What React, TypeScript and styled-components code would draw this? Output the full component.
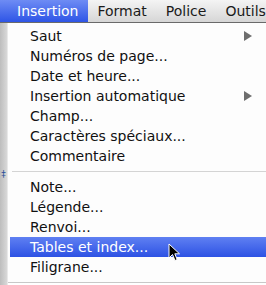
import styled, { createGlobalStyle } from 'styled-components';

const Global = createGlobalStyle`
    html, body{
        margin: 0;
        padding: 0;
        background: #fff;
    }
    body{
        font-family: "DejaVu Sans", "Liberation Sans", sans-serif;
        width: 266px;
        height: 285px;
        overflow: hidden;
    }
`

const Screen = styled.div`
    width: 266px;
    height: 285px;
    display: flex;
    flex-direction: column;
    position: relative;
`

const MenuBar = styled.div`
    display: flex;
    height: 22px;
    background: linear-gradient(#f4f4f4, #d6d6d6);
    border-bottom: 1px solid #6a6a6a;
    white-space: nowrap;
    overflow: hidden;
`

const BarItem = styled.div<{ $active?: boolean }>`
    display: flex;
    align-items: center;
    padding: 0 10px 0 ${p => p.$active ? 17 : 9}px;
    font-size: 14px;
    color: ${p => p.$active ? '#fff' : '#1a1a1a'};
    background: ${p => p.$active ? 'linear-gradient(#6e8cf4, #2e55e6)' : 'transparent'};
`

const Body = styled.div`
    flex: 1;
    display: flex;
`

const Strip = styled.div`
    width: 7px;
    background: linear-gradient(90deg, #bdbdbd, #d8d8d8);
    border-right: 1px solid #e8e8e8;
    display: flex;
    flex-direction: column;
    align-items: center;
    padding-top: 146px;
    font-size: 9px;
    color: #2a4f9a;
    overflow: hidden;
`

const Menu = styled.div`
    flex: 1;
    background: #fdfdfd;
    padding: 3px 0 4px 2px;
    border-bottom: 1px solid #c8c8c8;
    margin-bottom: 2px;
`

const Item = styled.div<{ $hi?: boolean }>`
    height: 20px;
    display: flex;
    align-items: center;
    justify-content: space-between;
    padding: 0 14px 0 20px;
    font-size: 14px;
    color: ${p => p.$hi ? '#fff' : '#111'};
    background: ${p => p.$hi ? 'linear-gradient(#5f80f2, #2d52e4)' : 'transparent'};
`

const Arrow = styled.span`
    width: 0;
    height: 0;
    border-top: 5px solid transparent;
    border-bottom: 5px solid transparent;
    border-left: 8px solid #6e6e6e;
`

const Separator = styled.div`
    height: 1px;
    background: #d4d4d4;
    margin: 5px 0 5px 2px;
`

const Cursor = styled.svg`
    position: absolute;
    left: 168px;
    top: 243px;
`

const top = [
    { label: 'Saut', sub: true },
    { label: 'Numéros de page...' },
    { label: 'Date et heure...' },
    { label: 'Insertion automatique', sub: true },
    { label: 'Champ...' },
    { label: 'Caractères spéciaux...' },
    { label: 'Commentaire' },
]

const bottom = [
    { label: 'Note...' },
    { label: 'Légende...' },
    { label: 'Renvoi...' },
    { label: 'Tables et index...', hi: true },
    { label: 'Filigrane...' },
]

function App(){
    return(
        <Screen>
            <Global />
            <MenuBar>
                <BarItem $active>Insertion</BarItem>
                <BarItem>Format</BarItem>
                <BarItem>Police</BarItem>
                <BarItem>Outils</BarItem>
            </MenuBar>
            <Body>
                <Strip>‡</Strip>
                <Menu>
                    {top.map(it => (
                        <Item key={it.label}>
                            <span>{it.label}</span>
                            {it.sub && <Arrow />}
                        </Item>
                    ))}
                    <Separator />
                    {bottom.map(it => (
                        <Item key={it.label} $hi={it.hi}>
                            <span>{it.label}</span>
                        </Item>
                    ))}
                </Menu>
            </Body>
            <Cursor width="14" height="20" viewBox="0 0 14 20">
                <path d="M1 1 L1 15 L4.5 11.5 L7 17.5 L9.2 16.6 L6.8 10.8 L11.5 10.8 Z" fill="#000" stroke="#fff" strokeWidth="1" />
            </Cursor>
        </Screen>
    )
}

export default App;
